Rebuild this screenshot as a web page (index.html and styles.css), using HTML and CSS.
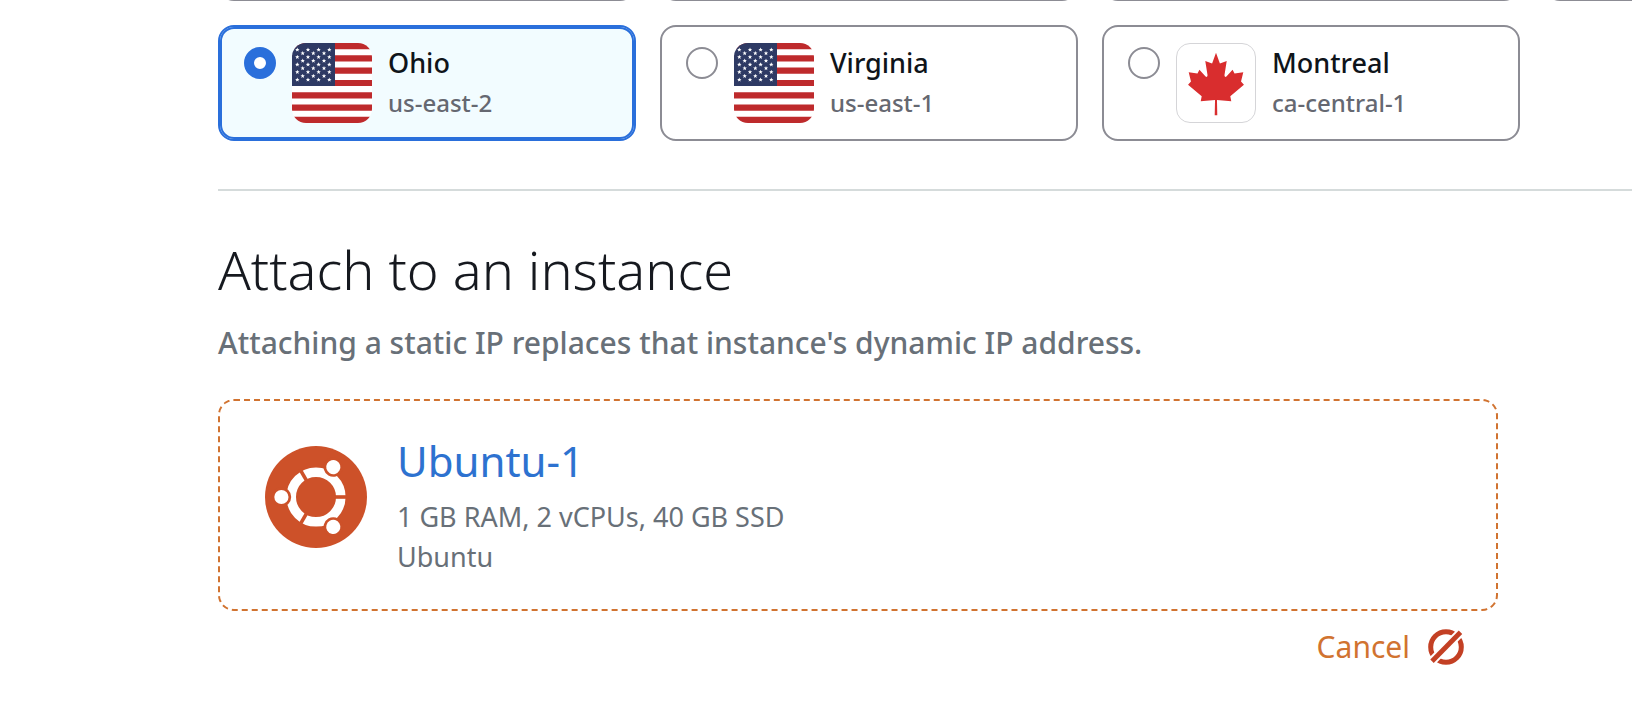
FILE: index.html
```html
<!DOCTYPE html>
<html lang="en">
<head>
<meta charset="utf-8">
<title>Create static IP</title>
<link rel="stylesheet" href="styles.css">
</head>
<body>
<svg class="defs" aria-hidden="true">
  <defs>
    <path id="star" d="M0-2.3 .6-.8 2.2-.7 .95.3 1.4 1.9 0 1-1.4 1.9-.95.3-2.2-.7-.6-.8Z" fill="#fff"/>
    <g id="row4"><use href="#star" x="5.3"/><use href="#star" x="16"/><use href="#star" x="26.6"/><use href="#star" x="37.3"/></g>
    <g id="row3"><use href="#star" x="10.7"/><use href="#star" x="21.3"/><use href="#star" x="32"/></g>
    <symbol id="flag-us" viewBox="0 0 80 80">
      <path fill="#fff" d="M0 0h80v80H0z"/>
      <path stroke="#be2a2c" stroke-width="6.15" d="M0 3.08h80M0 15.38h80M0 27.69h80M0 40h80M0 52.31h80M0 64.62h80M0 76.92h80"/>
      <path fill="#2e3a64" d="M0 0h43v43.08H0z"/>
      <use href="#row4" y="6.7"/><use href="#row3" y="10.3"/><use href="#row4" y="14"/>
      <use href="#row3" y="17.8"/><use href="#row4" y="21.6"/><use href="#row3" y="25.3"/>
      <use href="#row4" y="29"/><use href="#row3" y="33"/><use href="#row4" y="36.7"/>
    </symbol>
  </defs>
</svg>
<main class="page">
  <section class="regions" aria-label="Region">
    <div class="region-row region-row-cut" aria-hidden="true">
      <div class="card"></div><div class="card"></div><div class="card"></div><div class="card"></div>
    </div>
    <div class="region-row">
      <label class="card card-selected">
        <input class="radio" type="radio" name="region" checked>
        <svg class="flag"><use href="#flag-us"/></svg>
        <span class="card-text"><span class="card-name">Ohio</span><span class="card-code">us-east-2</span></span>
      </label>
      <label class="card">
        <input class="radio" type="radio" name="region">
        <svg class="flag"><use href="#flag-us"/></svg>
        <span class="card-text"><span class="card-name">Virginia</span><span class="card-code">us-east-1</span></span>
      </label>
      <label class="card">
        <input class="radio" type="radio" name="region">
        <svg class="flag flag-bordered" viewBox="0 0 240 240"><path fill="#d92d2e" d="M120 27 132 60 153 52 146 96Q147 104 152 100L171 79 177 91 204 87 197 115 206 125 164 161 167 176 123 172 124 219H116L117 172 73 176 76 161 34 125 43 115 36 87 63 91 69 79 88 100Q93 104 94 96L87 52 108 60Z"/></svg>
        <span class="card-text"><span class="card-name">Montreal</span><span class="card-code">ca-central-1</span></span>
      </label>
    </div>
  </section>
  <section class="attach">
    <h2 class="title">Attach to an instance</h2>
    <p class="subtitle">Attaching a static IP replaces that instance's dynamic IP address.</p>
    <div class="attach-body">
      <div class="instance">
        <svg class="logo" viewBox="-51 -51 102 102" aria-hidden="true">
          <circle r="51" fill="#cd5129"/>
          <circle r="24.8" fill="none" stroke="#fff" stroke-width="9.6"/>
          <g id="arm"><path stroke="#cd5129" stroke-width="3.6" d="M18 0H32"/><circle cx="-34.6" r="9.8" fill="#cd5129"/><circle cx="-34.6" r="7.1" fill="#fff"/></g>
          <use href="#arm" transform="rotate(120)"/><use href="#arm" transform="rotate(240)"/>
        </svg>
        <div class="instance-text">
          <a class="instance-name" href="#">Ubuntu-1</a>
          <p class="spec">1 GB RAM, 2 vCPUs, 40 GB SSD</p>
          <p class="spec">Ubuntu</p>
        </div>
      </div>
      <button class="cancel" type="button">Cancel
        <svg class="cancel-icon" viewBox="-18 -18 36 36" aria-hidden="true">
          <circle r="15.3" fill="none" stroke="#c34024" stroke-width="5"/>
          <path stroke="#fff" stroke-width="9" d="M-16 16 17-17"/>
          <path stroke="#c34024" stroke-width="4.8" d="M-14 14.3 14.5-14.7"/>
        </svg>
      </button>
    </div>
  </section>
</main>
</body>
</html>
```
FILE: styles.css
```css
* { box-sizing: border-box; }

body {
  margin: 0;
  background: #fff;
  color: #0f141a;
  font-family: "Noto Sans", "Open Sans", sans-serif;
}

.defs { position: absolute; width: 0; height: 0; }

.page { padding-left: 218px; overflow: hidden; }

.regions {
  overflow: hidden;
  padding-bottom: 48px;
  border-bottom: 2px solid #d5dbdb;
}

.region-row {
  display: grid;
  grid-template-columns: repeat(4, minmax(418px, 1fr));
  gap: 24px;
}

/* The row above is scrolled out; only its lower edge shows. */
.region-row-cut {
  height: 1px;
  margin-bottom: 24px;
  align-items: end;
  align-content: end;
  overflow: hidden;
}

.card {
  display: flex;
  align-items: flex-start;
  gap: 16px;
  padding: 16px 24px;
  border: 2px solid #8c8c94;
  border-radius: 16px;
  background: #fff;
}

.card-selected {
  border-color: #2a6fdb;
  box-shadow: inset 0 0 0 2px #2a6fdb;
  background: #f2fcff;
}

.radio {
  appearance: none;
  flex: none;
  width: 32px;
  height: 32px;
  margin: 4px 0 0;
  border: 2px solid #8c8c94;
  border-radius: 50%;
  background: #fff;
}

.radio:checked { border: 10px solid #2a6fdb; }

.flag { flex: none; width: 80px; height: 80px; border-radius: 14px; }
.flag-bordered { border: 1px solid #d5d5d8; }

.card-text { display: flex; flex-direction: column; line-height: 40px; }
.card-name { font-size: 27px; font-weight: 500; }
.card-code { font-size: 24px; font-weight: 500; color: #656871; }

.attach { padding: 42px 32px 32px 0; }

.title {
  margin: 0;
  font-size: 54px;
  font-weight: 300;
  line-height: 72px;
  color: #16191f;
}

.subtitle {
  margin: 14px 0 32px;
  font-size: 30px;
  font-weight: 500;
  line-height: 48px;
  color: #687078;
}

.attach-body {
  display: flex;
  flex-direction: column;
  max-width: 1280px;
}

.instance {
  display: flex;
  align-items: flex-start;
  gap: 30px;
  padding: 32px 45px;
  border: 2px dashed #d17330;
  border-radius: 16px;
}

.logo { flex: none; width: 102px; height: 102px; margin-top: 13px; }

.instance-text { display: flex; flex-direction: column; align-items: flex-start; }

.instance-name {
  margin-bottom: 8px;
  font-size: 42px;
  line-height: 56px;
  color: #2d72d0;
  text-decoration: none;
}

.spec { margin: 0; font-size: 27px; line-height: 40px; color: #687078; }

.cancel {
  display: flex;
  align-items: center;
  align-self: flex-end;
  gap: 18px;
  margin: 12px 34px 0 0;
  padding: 0;
  border: 0;
  background: none;
  font: inherit;
  font-size: 30px;
  line-height: 48px;
  color: #d17330;
}

.cancel-icon { width: 36px; height: 36px; }
```
